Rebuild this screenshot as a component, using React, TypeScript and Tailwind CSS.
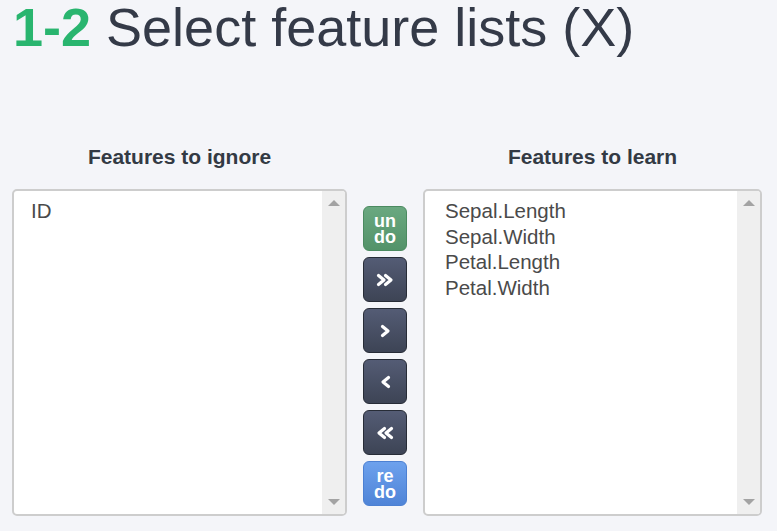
import React from "react"

const ignored = ["ID"]
const learned = ["Sepal.Length", "Sepal.Width", "Petal.Length", "Petal.Width"]

function Chevron({ double, left }: { double?: boolean; left?: boolean }) {
  const w = double ? 18 : 11
  return (
    <svg width={w} height="14" viewBox={`0 0 ${w} 14`} className={left ? "-scale-x-100" : ""}>
      <g fill="none" stroke="white" strokeWidth="3.2" strokeLinecap="round" strokeLinejoin="round">
        <polyline points="2.5,2.5 8,7 2.5,11.5" />
        {double && <polyline points="9.5,2.5 15,7 9.5,11.5" />}
      </g>
    </svg>
  )
}

function ListBox({ items, padLeft }: { items: string[]; padLeft: string }) {
  return (
    <div className="flex h-[327px] rounded-[5px] border-2 border-[#cdcdcd] bg-white overflow-hidden">
      <div className={`flex-1 pt-[7px] ${padLeft}`}>
        {items.map((item) => (
          <div key={item} className="text-[20.5px] leading-[25.7px] text-[#4a4a4a]">
            {item}
          </div>
        ))}
      </div>
      {/* fake scrollbar */}
      <div className="w-[23px] bg-[#efefef] flex flex-col items-center justify-between py-[9px]">
        <div className="w-0 h-0 border-x-[6px] border-x-transparent border-b-[6px] border-b-[#a3a3a3]" />
        <div className="w-0 h-0 border-x-[6px] border-x-transparent border-t-[6px] border-t-[#a3a3a3]" />
      </div>
    </div>
  )
}

function TextButton({ top, bottom, className }: { top: string; bottom: string; className: string }) {
  return (
    <button
      className={`w-[44px] h-[45px] rounded-[6px] border-[1.5px] flex flex-col items-center justify-center text-white font-bold text-[18px] leading-[16px] ${className}`}
    >
      <span>{top}</span>
      <span>{bottom}</span>
    </button>
  )
}

function ArrowButton({ children }: { children: React.ReactNode }) {
  return (
    <button className="w-[44px] h-[45px] rounded-[6px] border-[1.5px] border-[#272c37] bg-gradient-to-b from-[#545c75] to-[#3d4455] flex items-center justify-center">
      {children}
    </button>
  )
}

export default function App() {
  return (
    <div
      className="w-[777px] h-[531px] bg-[#f4f5f9] overflow-hidden"
      style={{ fontFamily: '"Liberation Sans", Arial, sans-serif' }}
    >
      <h1 className="pl-[13px] text-[54px] leading-[54px] text-[#343a48]">
        <span className="font-bold text-[#29b56f]">1-2</span> Select feature lists (X)
      </h1>

      <div className="mt-[91px] pl-[12px] grid grid-cols-[335px_76px_339px]">
        {/* ignore column */}
        <div>
          <h2 className="h-[24px] mb-[20px] text-center text-[21px] leading-[24px] font-bold text-[#333a44]">
            Features to ignore
          </h2>
          <ListBox items={ignored} padLeft="pl-[17px]" />
        </div>

        {/* move buttons */}
        <div className="pt-[61px] flex flex-col items-center gap-[6px]">
          <TextButton
            top="un"
            bottom="do"
            className="border-[#4b8a60] bg-gradient-to-b from-[#6aa880] to-[#53936a]"
          />
          <ArrowButton>
            <Chevron double />
          </ArrowButton>
          <ArrowButton>
            <Chevron />
          </ArrowButton>
          <ArrowButton>
            <Chevron left />
          </ArrowButton>
          <ArrowButton>
            <Chevron double left />
          </ArrowButton>
          <TextButton
            top="re"
            bottom="do"
            className="border-[#4c80d2] bg-gradient-to-b from-[#6da1ed] to-[#4f84d7]"
          />
        </div>

        {/* learn column */}
        <div>
          <h2 className="h-[24px] mb-[20px] text-center text-[21px] leading-[24px] font-bold text-[#333a44]">
            Features to learn
          </h2>
          <ListBox items={learned} padLeft="pl-[20px]" />
        </div>
      </div>
    </div>
  )
}
